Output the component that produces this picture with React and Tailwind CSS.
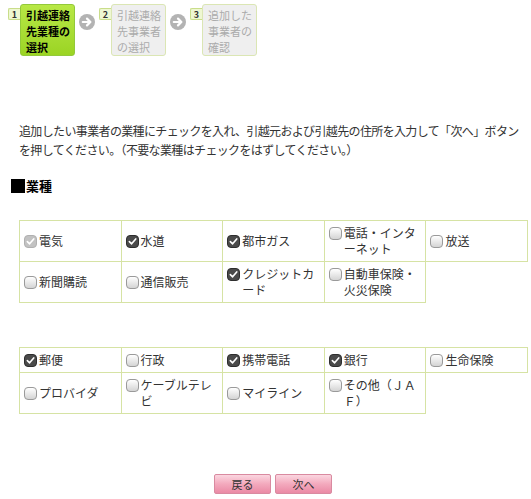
// Moving-notice wizard, step 1: choose business categories
import React from 'react';

const font = { fontFamily: '"Noto Sans CJK JP", "Noto Sans", sans-serif' };

const steps = [
  { no: 1, lines: ['引越連絡', '先業種の', '選択'], active: true },
  { no: 2, lines: ['引越連絡', '先事業者', 'の選択'] },
  { no: 3, lines: ['追加した', '事業者の', '確認'] },
];

const table1 = [
  [
    { label: '電気', state: 'disabled' },
    { label: '水道', state: 'on' },
    { label: '都市ガス', state: 'on' },
    { label: '電話・インターネット' },
    { label: '放送' },
  ],
  [
    { label: '新聞購読' },
    { label: '通信販売' },
    { label: 'クレジットカード', state: 'on' },
    { label: '自動車保険・火災保険' },
  ],
];

const table2 = [
  [
    { label: '郵便', state: 'on' },
    { label: '行政' },
    { label: '携帯電話', state: 'on' },
    { label: '銀行', state: 'on' },
    { label: '生命保険' },
  ],
  [
    { label: 'プロバイダ' },
    { label: 'ケーブルテレビ' },
    { label: 'マイライン' },
    { label: 'その他（ＪＡＦ）' },
  ],
];

const Check = ({ state }) => {
  if (state === 'on' || state === 'disabled') {
    const on = state === 'on';
    return (
      <span
        className={
          'flex shrink-0 items-center justify-center w-[13px] h-[13px] rounded-[4px] border ' +
          (on ? 'bg-[#4a4a4a] border-[#2e2e2e]' : 'bg-[#c2c2c2] border-[#b0b0b0]')
        }
      >
        <svg width="9" height="9" viewBox="0 0 10 10">
          <path d="M1.5 5.2 L4 7.6 L8.6 2.2" fill="none" stroke="#fff" strokeWidth="1.8" strokeLinecap="round" strokeLinejoin="round" />
        </svg>
      </span>
    );
  }
  return (
    <span className="block shrink-0 w-[13px] h-[13px] rounded-[4px] border border-[#9a9a9a] bg-gradient-to-b from-white to-[#d4d4d4]" />
  );
};

const Arrow = () => (
  <svg width="16" height="16" viewBox="0 0 16 16" className="mt-[10px] mx-[4px] shrink-0">
    <circle cx="8" cy="8" r="8" fill="#b3b3b3" />
    <path d="M3.8 8 H11 M8 4.6 L11.4 8 L8 11.4" fill="none" stroke="#fff" strokeWidth="2.2" strokeLinecap="round" strokeLinejoin="round" />
  </svg>
);

const Step = ({ step }) => (
  <div className="flex items-start">
    <div className="mt-[4px] w-[12px] h-[12px] flex items-center justify-center rounded-l-[2px] border border-r-0 border-[#c9dd8a] bg-[#eef7d2] text-[9px] font-bold leading-none text-[#333]">
      {step.no}
    </div>
    <div
      className={
        'w-[55px] h-[52px] rounded-[3px] border pl-[5px] pt-[2px] text-[11px] leading-[16px] ' +
        (step.active
          ? 'border-[#93c93a] bg-gradient-to-b from-[#b8e845] to-[#9bd423] text-black font-bold'
          : 'border-[#dbe6b4] bg-[#efefef] text-[#ababab]')
      }
    >
      {step.lines.map((l, i) => (
        <div key={i}>{l}</div>
      ))}
    </div>
  </div>
);

const CatTable = ({ rows, className }) => (
  <table className={'table-fixed border-collapse w-[508px] ml-[19px] ' + className}>
    <tbody>
      {rows.map((row, r) => (
        <tr key={r}>
          {row.map((c, i) => (
            <td key={i} className="w-[101.6px] border border-[#d6e3a4] px-[4px] py-[4px] align-middle">
              <div className="flex items-start text-[12px] leading-[16px] text-[#333]">
                <span className="mt-[2px] mr-[2px]">
                  <Check state={c.state} />
                </span>
                <span>{c.label}</span>
              </div>
            </td>
          ))}
        </tr>
      ))}
    </tbody>
  </table>
);

const Btn = ({ children }) => (
  <button className="w-[57px] h-[20px] rounded-[2px] border border-[#d98aa0] bg-gradient-to-b from-[#fad6e0] via-[#f3a9bd] to-[#ea8aa5] text-[11px] leading-none text-[#333]">
    {children}
  </button>
);

export default function App() {
  return (
    <div className="w-[531px] h-[499px] bg-white overflow-hidden" style={font}>
      <div className="flex items-start pt-[4px] pl-[8px]">
        <Step step={steps[0]} />
        <Arrow />
        <Step step={steps[1]} />
        <Arrow />
        <Step step={steps[2]} />
      </div>

      <p className="mt-[65px] ml-[19px] w-[508px] text-[12px] leading-[19px] tracking-[-0.64px] text-[#333]">
        追加したい事業者の業種にチェックを入れ、引越元および引越先の住所を入力して「次へ」ボタンを押してください。（不要な業種はチェックをはずしてください。）
      </p>

      <h2 className="mt-[18px] ml-[11px] flex items-center gap-[1px] text-[13px] leading-[18px] font-bold text-black">
        <span className="block w-[14px] h-[14px] bg-black" />
        業種
      </h2>

      <CatTable rows={table1} className="mt-[25px]" />
      <CatTable rows={table2} className="mt-[44px]" />

      <div className="ml-[19px] w-[508px] mt-[60px] flex justify-center gap-[4px]">
        <Btn>戻る</Btn>
        <Btn>次へ</Btn>
      </div>
    </div>
  );
}
